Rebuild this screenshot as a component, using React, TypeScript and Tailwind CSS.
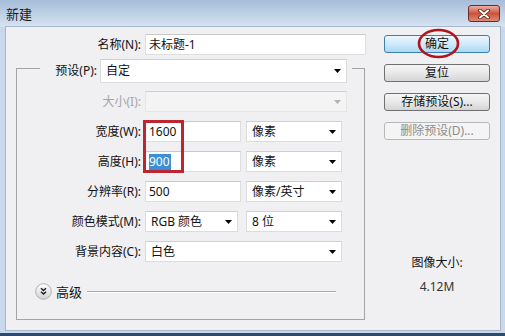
import React from "react";

function Arrow({ disabled }: { disabled?: boolean }) {
  return (
    <svg width="7" height="4" viewBox="0 0 7 4" className="shrink-0">
      <path d="M0 0H7L3.5 4Z" fill={disabled ? "#b4b4b4" : "#000"} />
    </svg>
  );
}

function Select({ className, text, disabled }: { className: string; text?: string; disabled?: boolean }) {
  return (
    <div
      className={
        "h-full flex items-center justify-between pl-[5px] pr-[5px] border border-[#dcdcdc] border-t-[#cfcfcf] " +
        (disabled ? "bg-[#f4f4f4] border-[#e6e6e6]" : "bg-white") +
        " " +
        className
      }
    >
      <span className="leading-[16px]">{text}</span>
      <Arrow disabled={disabled} />
    </div>
  );
}

function Input({ className, children }: { className: string; children?: React.ReactNode }) {
  return (
    <div className={"h-full flex items-center pl-[3px] bg-white border border-[#dedede] border-t-[#c9c9c9] " + className}>
      {children}
    </div>
  );
}

function Button({ text, kind }: { text: string; kind?: "default" | "disabled" }) {
  let cls = "border-[#707070] bg-linear-to-b from-[#f5f5f5] via-[#e9e9e9] to-[#d4d4d4] text-[#111]";
  if (kind === "default") cls = "border-[#3c7fb1] bg-linear-to-b from-[#ecf7fd] via-[#cfeafb] to-[#a9d9f3] text-[#111]";
  if (kind === "disabled") cls = "border-[#b5b8ba] bg-[#f4f4f4] text-[#8c8c8c]";
  return (
    <div className={"h-[18px] w-full rounded-[3px] border flex items-center justify-center leading-[16px] " + cls}>{text}</div>
  );
}

export default function App() {
  return (
    <div className="relative w-[505px] h-[336px] overflow-hidden flex flex-col bg-[#c9d9eb] text-[12px] text-[#121212] font-['Noto_Sans','Noto_Sans_CJK_SC',sans-serif]">
      {/* title bar */}
      <div className="h-[27px] shrink-0 flex items-start justify-between bg-linear-to-b from-[#a6bdd9] to-[#d6e3f1]">
        <span className="ml-[6px] mt-[6px] text-[13px] leading-[16px] text-[#1a1a1a]">新建</span>
        <div className="mt-[5px] mr-[5px] w-[32px] h-[17px] rounded-[3px] border border-[#6f2b1f] bg-linear-to-b from-[#eab0a2] via-[#c8523c] to-[#dc8a74] flex items-center justify-center">
          <svg width="12" height="10" viewBox="0 0 12 10">
            <path d="M2 1.5L10 8.5M10 1.5L2 8.5" stroke="#5b1d12" strokeWidth="3.6" strokeLinecap="round" />
            <path d="M2 1.5L10 8.5M10 1.5L2 8.5" stroke="#ffffff" strokeWidth="2" strokeLinecap="round" />
          </svg>
        </div>
      </div>

      {/* body */}
      <div className="flex-1 ml-[6px] mr-[5px] mb-[6px] bg-[#f0eff1] shadow-[0_0_0_1px_#a7b8cb] flex">
        {/* left column */}
        <div className="w-[378px] shrink-0 flex flex-col pl-[10px] pt-[7px]">
          <div className="flex h-[21px] items-center">
            <span className="w-[125px] text-right leading-[16px]">名称(N):</span>
            <Input className="ml-[4px] w-[221px]">
              <span className="leading-[16px]">未标题-1</span>
            </Input>
          </div>

          <div className="mt-[13px] w-[349px] h-[252px] border border-[#a4a4a4] flex flex-col">
            {/* preset row over the border */}
            <div className="-mt-[10px] ml-[23px] w-fit h-[24px] flex items-center bg-[#f0eff1] pl-[5px] pr-[5px]">
              <span className="w-[52px] text-right leading-[16px]">预设(P):</span>
              <Select className="ml-[3px] w-[247px]" text="自定" />
            </div>

            <div className="mt-[8px] flex h-[21px] items-center">
              <span className="w-[124px] text-right leading-[16px] text-[#a5a5a5]">大小(I):</span>
              <Select className="ml-[4px] w-[202px]" disabled />
            </div>

            <div className="mt-[9px] flex h-[21px] items-center">
              <span className="w-[124px] text-right leading-[16px]">宽度(W):</span>
              <Input className="ml-[4px] w-[96px]">
                <span className="leading-[16px]">1600</span>
              </Input>
              <Select className="ml-[5px] w-[96px]" text="像素" />
            </div>

            <div className="mt-[9px] flex h-[21px] items-center">
              <span className="w-[124px] text-right leading-[16px]">高度(H):</span>
              <Input className="ml-[4px] w-[96px]">
                <span className="leading-[16px] bg-[#3d8ed4] text-white pr-[1px]">900</span>
              </Input>
              <Select className="ml-[5px] w-[96px]" text="像素" />
            </div>

            <div className="mt-[9px] flex h-[21px] items-center">
              <span className="w-[124px] text-right leading-[16px]">分辨率(R):</span>
              <Input className="ml-[4px] w-[96px]">
                <span className="leading-[16px]">500</span>
              </Input>
              <Select className="ml-[5px] w-[96px]" text="像素/英寸" />
            </div>

            <div className="mt-[9px] flex h-[21px] items-center">
              <span className="w-[124px] text-right leading-[16px]">颜色模式(M):</span>
              <Select className="ml-[4px] w-[93px]" text="RGB 颜色" />
              <Select className="ml-[8px] w-[96px]" text="8 位" />
            </div>

            <div className="mt-[9px] flex h-[21px] items-center">
              <span className="w-[124px] text-right leading-[16px]">背景内容(C):</span>
              <Select className="ml-[4px] w-[197px]" text="白色" />
            </div>

            <div className="mt-[21px] ml-[18px] h-[17px] flex items-center">
              <svg width="17" height="17" viewBox="0 0 17 17" className="shrink-0">
                <defs>
                  <linearGradient id="adv" x1="0" y1="0" x2="0" y2="1">
                    <stop offset="0" stopColor="#ffffff" />
                    <stop offset="1" stopColor="#d2d2d2" />
                  </linearGradient>
                </defs>
                <circle cx="8.5" cy="8.5" r="7.8" fill="url(#adv)" stroke="#b0b0b0" strokeWidth="1" />
                <path d="M6 5.3L8.5 7.6L11 5.3M6 8.8L8.5 11.1L11 8.8" fill="none" stroke="#1e1e1e" strokeWidth="1.5" />
              </svg>
              <span className="ml-[4px] text-[13px] leading-[16px]">高级</span>
              <div className="ml-[5px] w-[249px] h-[2px] border-t border-[#a8a8a8] border-b border-b-white" />
            </div>
          </div>
        </div>

        {/* right column */}
        <div className="w-[106px] shrink-0 flex flex-col pt-[8px]">
          <Button text="确定" kind="default" />
          <div className="mt-[11px]">
            <Button text="复位" />
          </div>
          <div className="mt-[11px]">
            <Button text="存储预设(S)..." />
          </div>
          <div className="mt-[11px]">
            <Button text="删除预设(D)..." kind="disabled" />
          </div>
          <div className="mt-[115px] text-center leading-[16px]">图像大小:</div>
          <div className="mt-[8px] text-center leading-[16px] text-[#333]">4.12M</div>
        </div>
      </div>

      {/* annotations */}
      <div className="absolute left-[143px] top-[120px] w-[41px] h-[53px] border-[3px] border-[#bd2530]" />
      <svg className="absolute left-[417px] top-[28px]" width="43" height="31" viewBox="0 0 43 31">
        <ellipse cx="21.5" cy="15.5" rx="19.5" ry="13.5" fill="none" stroke="#b2141e" strokeWidth="2.6" />
      </svg>
      {/* bottom dark edge */}
      <div className="absolute left-0 bottom-0 w-full h-[3px] bg-[#2c4b70]" />
    </div>
  );
}
